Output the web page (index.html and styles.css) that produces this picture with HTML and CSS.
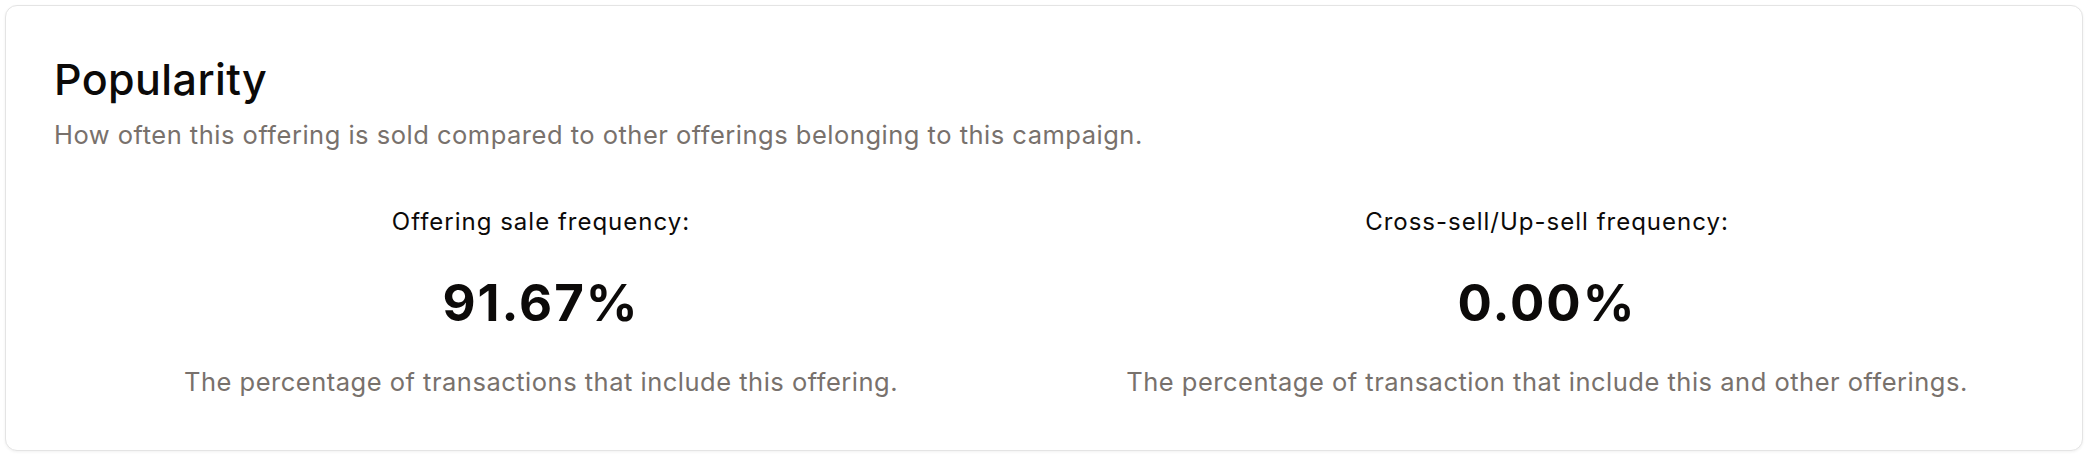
FILE: index.html
```html
<!DOCTYPE html>
<html lang="en">
<head>
    <meta charset="UTF-8">
    <meta name="viewport" content="width=device-width, initial-scale=1.0">
    <title>Popularity</title>
    <link rel="stylesheet" href="styles.css">
</head>
<body>
    <div class="card">
        <h2 class="card-title">Popularity</h2>
        <p class="card-subtitle">How often this offering is sold compared to other offerings belonging to this campaign.</p>

        <div class="stats">
            <div class="stat">
                <div class="stat-label">Offering sale frequency:</div>
                <div class="stat-value">91.67%</div>
                <div class="stat-note">The percentage of transactions that include this offering.</div>
            </div>
            <div class="stat">
                <div class="stat-label">Cross-sell/Up-sell frequency:</div>
                <div class="stat-value">0.00%</div>
                <div class="stat-note">The percentage of transaction that include this and other offerings.</div>
            </div>
        </div>
    </div>
</body>
</html>
```

FILE: styles.css
```css
body {
    font-family: Inter, 'Noto Sans', sans-serif;
    background-color: #ffffff;
    margin: 0;
    padding: 5px;
    color: #0c0a09;
}

.card {
    border: 1px solid #e4e4e4;
    border-radius: 12px;
    padding: 47px 48px 50px;
    box-shadow: 0 1px 3px rgba(0, 0, 0, 0.06);
    background-color: #ffffff;
}

.card-title {
    font-size: 43px;
    font-weight: 500;
    line-height: 52px;
    letter-spacing: 0.4px;
    margin: 0;
}

.card-subtitle {
    font-size: 25.5px;
    line-height: 36px;
    letter-spacing: 0.5px;
    color: #78716c;
    margin: 12px 0 0;
}

.stats {
    display: grid;
    grid-template-columns: 1fr 1fr;
    gap: 32px;
    margin-top: 52px;
}

.stat {
    text-align: center;
}

.stat-label {
    font-size: 24px;
    line-height: 34px;
    letter-spacing: 1px;
}

.stat-value {
    font-size: 51px;
    font-weight: 700;
    line-height: 62px;
    letter-spacing: 2px;
    margin-top: 33px;
}

.stat-note {
    font-size: 25.5px;
    line-height: 36px;
    letter-spacing: 0.5px;
    color: #78716c;
    margin-top: 30px;
}
```
